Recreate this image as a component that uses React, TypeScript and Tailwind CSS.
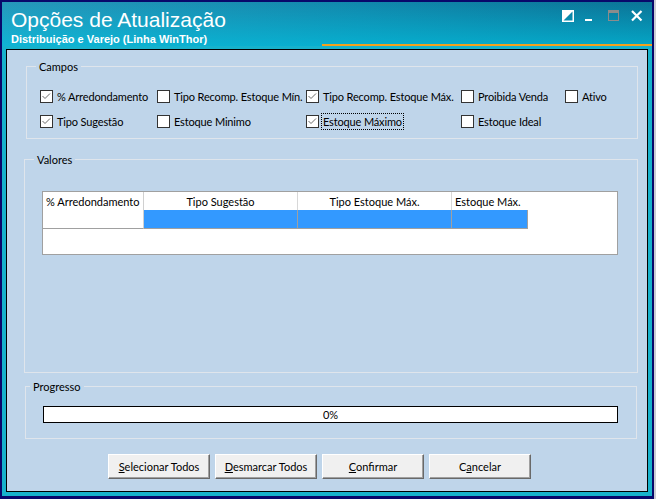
import React from "react";

function CheckBox({ checked }: { checked: boolean }) {
  return (
    <span className="w-[13px] h-[13px] border border-[#333333] bg-white flex items-center justify-center shrink-0">
      {checked && (
        <svg width="11" height="11" viewBox="0 0 11 11">
          <path d="M1.5 5 L4 7.5 L9 2.5" stroke="#6a6a6a" strokeWidth="1" fill="none" />
        </svg>
      )}
    </span>
  );
}

function Item({ checked, label, focus }: { checked: boolean; label: string; focus?: boolean }) {
  return (
    <div className="flex items-center gap-[4px] h-[13px]">
      <CheckBox checked={checked} />
      <span
        className={
          "leading-[13px] whitespace-nowrap tracking-[-0.15px] " +
          (focus ? "outline-1 outline-dotted outline-black outline-offset-[1px]" : "")
        }
      >
        {label}
      </span>
    </div>
  );
}

function Btn({ children }: { children: React.ReactNode }) {
  return (
    <button className="w-[102px] h-[25px] bg-[#f0f0f0] border border-t-white border-l-white border-r-[#696969] border-b-[#696969] shadow-[inset_-1px_-1px_0_#a0a0a0] flex items-center justify-center leading-[13px] text-black">
      <span>{children}</span>
    </button>
  );
}

export default function App() {
  return (
    <div className="w-[656px] h-[499px] bg-[#08086b] flex pt-[2px] pl-[2px] pb-[3px] pr-[2px] border-r-2 border-[#c9ccd4] font-['Lato',sans-serif] text-[11px] text-black">
      <div className="flex-1 flex flex-col bg-[#17b2cc]">
        {/* Title bar */}
        <div className="relative h-[44px] flex justify-between bg-[linear-gradient(to_bottom,rgba(0,200,230,0)_0%,rgba(0,200,230,0.6)_100%),linear-gradient(to_right,#2797ba,#1188ac_55%,#0b7396)]">
          <div className="pl-[9px] pt-[6px] text-white font-['Liberation_Sans',Arial,sans-serif]">
            <div className="text-[21px] leading-[24px]">Opções de Atualização</div>
            <div className="text-[11px] leading-[13px] font-bold mt-[1px]">Distribuição e Varejo (Linha WinThor)</div>
          </div>
          <div className="flex items-start gap-[11px] pt-[8px] pr-[9px]">
            <svg width="12" height="12" viewBox="0 0 12 12">
              <polygon points="0,0 12,0 0,12" fill="white" />
              <rect x="0.75" y="0.75" width="10.5" height="10.5" fill="none" stroke="white" strokeWidth="1.5" />
            </svg>
            <svg width="12" height="12" viewBox="0 0 12 12">
              <rect x="0" y="9" width="7" height="2" fill="white" />
            </svg>
            <svg width="12" height="12" viewBox="0 0 12 12">
              <rect x="0.5" y="0.5" width="10" height="10" fill="none" stroke="#8c8c8c" strokeWidth="1" />
              <rect x="0" y="0" width="11" height="3" fill="#8c8c8c" />
            </svg>
            <svg width="12" height="12" viewBox="0 0 12 12">
              <path d="M1 1 L10.5 10.5 M10.5 1 L1 10.5" stroke="white" strokeWidth="2.2" />
            </svg>
          </div>
          <div className="absolute left-[320px] right-0 bottom-0 h-[2px] bg-[#f3a21c]" />
        </div>

        {/* Panel */}
        <div className="mt-[3px] ml-[4px] w-[642px] h-[443px] border border-black bg-[#bfd5ea] flex flex-col">
          {/* Campos */}
          <fieldset className="ml-[19px] mt-[10px] w-[612px] h-[79px] border border-[#dfe5ec] px-0">
            <legend className="ml-[9px] px-[3px] leading-[13px]">Campos</legend>
            <div className="ml-[13px] mt-[17px] grid grid-cols-[117px_149px_155px_104px_auto] gap-y-[12px]">
              <Item checked label="% Arredondamento" />
              <Item checked={false} label="Tipo Recomp. Estoque Mín." />
              <Item checked label="Tipo Recomp. Estoque Máx." />
              <Item checked={false} label="Proibida Venda" />
              <Item checked={false} label="Ativo" />
              <Item checked label="Tipo Sugestão" />
              <Item checked={false} label="Estoque Minimo" />
              <Item checked label="Estoque Máximo" focus />
              <Item checked={false} label="Estoque Ideal" />
            </div>
          </fieldset>

          {/* Valores */}
          <fieldset className="ml-[17px] mt-[14px] w-[614px] h-[220px] border border-[#dfe5ec] px-0">
            <legend className="ml-[9px] px-[3px] leading-[13px]">Valores</legend>
            <div className="ml-[17px] mt-[25px] w-[576px] h-[64px] border border-[#a0a0a0] bg-white flex items-start">
              <div className="w-[101px] h-[37px] border-r border-b border-r-[#d0d0d0] border-b-[#a0a0a0] pl-[3px] pt-[3px] leading-[13px] whitespace-nowrap">
                % Arredondamento
              </div>
              <div className="flex flex-col w-[154px]">
                <div className="h-[18px] border-r border-[#d8d8d8] pt-[3px] leading-[13px] text-center">Tipo Sugestão</div>
                <div className="h-[19px] bg-[#3399ff] border-r border-b border-[#a0a0a0]" />
              </div>
              <div className="flex flex-col w-[154px]">
                <div className="h-[18px] border-r border-[#d8d8d8] pt-[3px] leading-[13px] text-center">Tipo Estoque Máx.</div>
                <div className="h-[19px] bg-[#3399ff] border-r border-b border-[#a0a0a0]" />
              </div>
              <div className="flex flex-col w-[76px]">
                <div className="h-[18px] pt-[3px] pl-[3px] leading-[13px] whitespace-nowrap">Estoque Máx.</div>
                <div className="h-[19px] bg-[#3399ff] border-r border-b border-[#a0a0a0]" />
              </div>
            </div>
          </fieldset>

          {/* Progresso */}
          <fieldset className="ml-[18px] mt-[7px] w-[612px] h-[59px] border border-[#dfe5ec] px-0">
            <legend className="ml-[4px] px-[3px] leading-[13px]">Progresso</legend>
            <div className="ml-[17px] mt-[13px] w-[575px] h-[17px] border border-black bg-white flex items-center justify-center leading-[13px]">
              0%
            </div>
          </fieldset>

          {/* Buttons */}
          <div className="ml-[101px] mt-[15px] flex gap-[5px]">
            <Btn>
              <span className="underline">S</span>elecionar Todos
            </Btn>
            <Btn>
              <span className="underline">D</span>esmarcar Todos
            </Btn>
            <Btn>
              <span className="underline">C</span>onfirmar
            </Btn>
            <Btn>
              C<span className="underline">a</span>ncelar
            </Btn>
          </div>
        </div>
      </div>
    </div>
  );
}
